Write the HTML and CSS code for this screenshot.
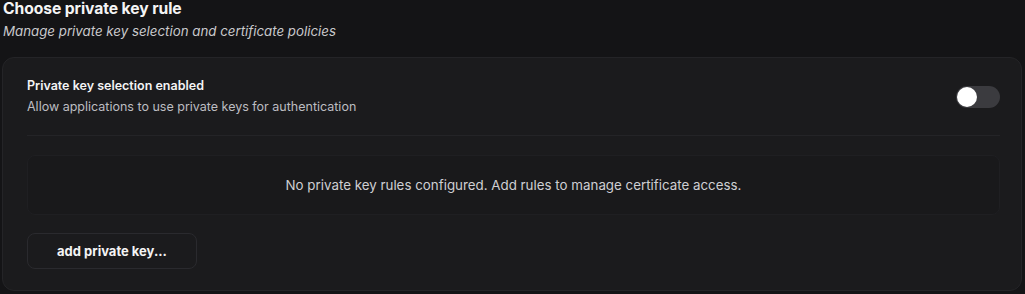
FILE: index.html
```html
<!DOCTYPE html>
<html lang="en">
<head>
<meta charset="utf-8">
<title>Choose private key rule</title>
<link rel="stylesheet" href="styles.css">
</head>
<body>
  <main class="page">
    <header class="page-header">
      <h1 class="page-title">Choose private key rule</h1>
      <p class="page-subtitle">Manage private key selection and certificate policies</p>
    </header>
    <section class="card">
      <div class="setting-row">
        <div class="setting-text">
          <div class="setting-title">Private key selection enabled</div>
          <div class="setting-desc">Allow applications to use private keys for authentication</div>
        </div>
        <button class="toggle" type="button" aria-label="Private key selection enabled"><span class="knob"></span></button>
      </div>
      <div class="empty-box">No private key rules configured. Add rules to manage certificate access.</div>
      <div class="actions">
        <button class="btn" type="button">add private key...</button>
      </div>
    </section>
  </main>
</body>
</html>
```
FILE: styles.css
```css
* { box-sizing: border-box; }
html, body {
  margin: 0;
  padding: 0;
  background: #141416;
  color: #f2f2f3;
  font-family: Inter, "Noto Sans", "Liberation Sans", sans-serif;
}
.page {
  padding: 0 3px 0 2px;
}
.page-header {
  padding-left: 1px;
}
.page-title {
  margin: 0;
  font-size: 15.7px;
  line-height: 18px;
  font-weight: 700;
  color: #f4f4f5;
  letter-spacing: -0.1px;
}
.page-subtitle {
  margin: 5px 0 0;
  font-size: 13.3px;
  line-height: 17px;
  font-style: italic;
  color: #c9c9cc;
}
.card {
  margin-top: 17px;
  background: #1b1b1d;
  border: 1px solid #242427;
  border-radius: 12px;
  padding: 20px 21px 21px 24px;
  height: 234px;
}
.setting-row {
  display: flex;
  align-items: center;
  justify-content: space-between;
  padding-bottom: 20px;
  border-bottom: 1px solid #242427;
}
.setting-title {
  font-size: 12.5px;
  line-height: 16px;
  font-weight: 600;
  color: #f4f4f5;
}
.setting-desc {
  margin-top: 5px;
  font-size: 12.5px;
  line-height: 16px;
  color: #bdbdc1;
}
.toggle {
  width: 44px;
  height: 22px;
  border: none;
  border-radius: 11px;
  background: #3b3b3f;
  padding: 1px;
  display: flex;
  align-items: center;
  cursor: pointer;
}
.knob {
  width: 20px;
  height: 20px;
  border-radius: 50%;
  background: #ffffff;
  display: block;
}
.empty-box {
  margin-top: 19px;
  height: 60px;
  display: flex;
  align-items: center;
  justify-content: center;
  background: #19191b;
  border: 1px solid #1f1f22;
  border-radius: 8px;
  font-size: 13.35px;
  color: #cfcfd3;
}
.actions {
  margin-top: 18px;
  display: flex;
}
.btn {
  width: 170px;
  height: 36px;
  background: #1b1b1d;
  border: 1px solid #2a2a2e;
  border-radius: 8px;
  color: #f4f4f5;
  font-family: inherit;
  font-size: 13px;
  font-weight: 700;
  cursor: pointer;
}
```
